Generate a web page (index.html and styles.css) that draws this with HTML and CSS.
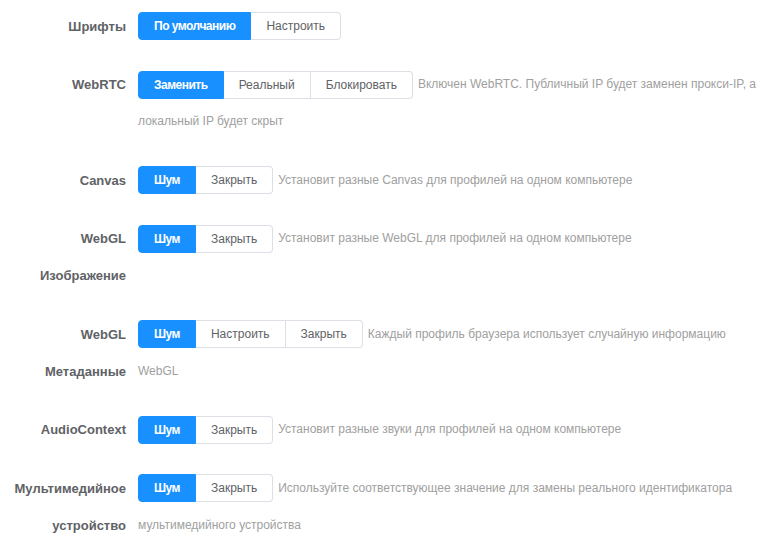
FILE: index.html
```html
<!DOCTYPE html>
<html lang="ru">
<head>
<meta charset="utf-8">
<title>Настройки</title>
<link rel="stylesheet" href="styles.css">
</head>
<body>
<div class="form">
  <div class="item">
    <div class="label">Шрифты</div>
    <div class="content"><span class="group"><span class="btn active">По умолчанию</span><span class="btn">Настроить</span></span></div>
  </div>
  <div class="item">
    <div class="label">WebRTC</div>
    <div class="content"><span class="group"><span class="btn active">Заменить</span><span class="btn">Реальный</span><span class="btn">Блокировать</span></span><span class="desc">Включен WebRTC. Публичный IP будет заменен прокси-IP, а<br>локальный IP будет скрыт</span></div>
  </div>
  <div class="item">
    <div class="label">Canvas</div>
    <div class="content"><span class="group"><span class="btn active">Шум</span><span class="btn">Закрыть</span></span><span class="desc">Установит разные Canvas для профилей на одном компьютере</span></div>
  </div>
  <div class="item">
    <div class="label">WebGL<br>Изображение</div>
    <div class="content"><span class="group"><span class="btn active">Шум</span><span class="btn">Закрыть</span></span><span class="desc">Установит разные WebGL для профилей на одном компьютере</span></div>
  </div>
  <div class="item">
    <div class="label">WebGL<br>Метаданные</div>
    <div class="content"><span class="group"><span class="btn active">Шум</span><span class="btn">Настроить</span><span class="btn">Закрыть</span></span><span class="desc">Каждый профиль браузера использует случайную информацию<br>WebGL</span></div>
  </div>
  <div class="item">
    <div class="label">AudioContext</div>
    <div class="content"><span class="group"><span class="btn active">Шум</span><span class="btn">Закрыть</span></span><span class="desc">Установит разные звуки для профилей на одном компьютере</span></div>
  </div>
  <div class="item">
    <div class="label">Мультимедийное<br>устройство</div>
    <div class="content"><span class="group"><span class="btn active">Шум</span><span class="btn">Закрыть</span></span><span class="desc">Используйте соответствующее значение для замены реального идентификатора<br>мультимедийного устройства</span></div>
  </div>
</div>
</body>
</html>
```

FILE: styles.css
```css
html, body {
  background: #ffffff;
}
body {
  margin: 7.5px 8px 8px 8px;
  font-family: "Liberation Sans", Arial, sans-serif;
}
.form {
  display: flex;
  flex-direction: column;
  gap: 21.5px;
}
.item {
  display: flex;
  align-items: flex-start;
}
.label {
  flex: none;
  width: 130px;
  box-sizing: border-box;
  padding-right: 12px;
  text-align: right;
  font-size: 13px;
  font-weight: bold;
  line-height: 37px;
  color: #606266;
}
.content {
  flex: 1;
  min-width: 0;
  font-size: 12px;
  line-height: 37px;
  color: #a0a0a0;
  white-space: nowrap;
}
.group {
  display: inline-flex;
  vertical-align: middle;
  line-height: 26px;
}
.btn {
  display: inline-block;
  height: 28px;
  box-sizing: border-box;
  padding: 0 15px;
  border: 1px solid #dcdfe6;
  border-left-width: 0;
  background: #ffffff;
  color: #606266;
  font-size: 12px;
  white-space: nowrap;
}
.btn:first-child {
  border-left-width: 1px;
  border-radius: 4px 0 0 4px;
}
.btn:last-child {
  border-radius: 0 4px 4px 0;
}
.btn.active {
  background: #1890ff;
  border-color: #1890ff;
  color: #ffffff;
  font-weight: bold;
  letter-spacing: -0.5px;
}
.desc {
  margin-left: 5px;
}
```
